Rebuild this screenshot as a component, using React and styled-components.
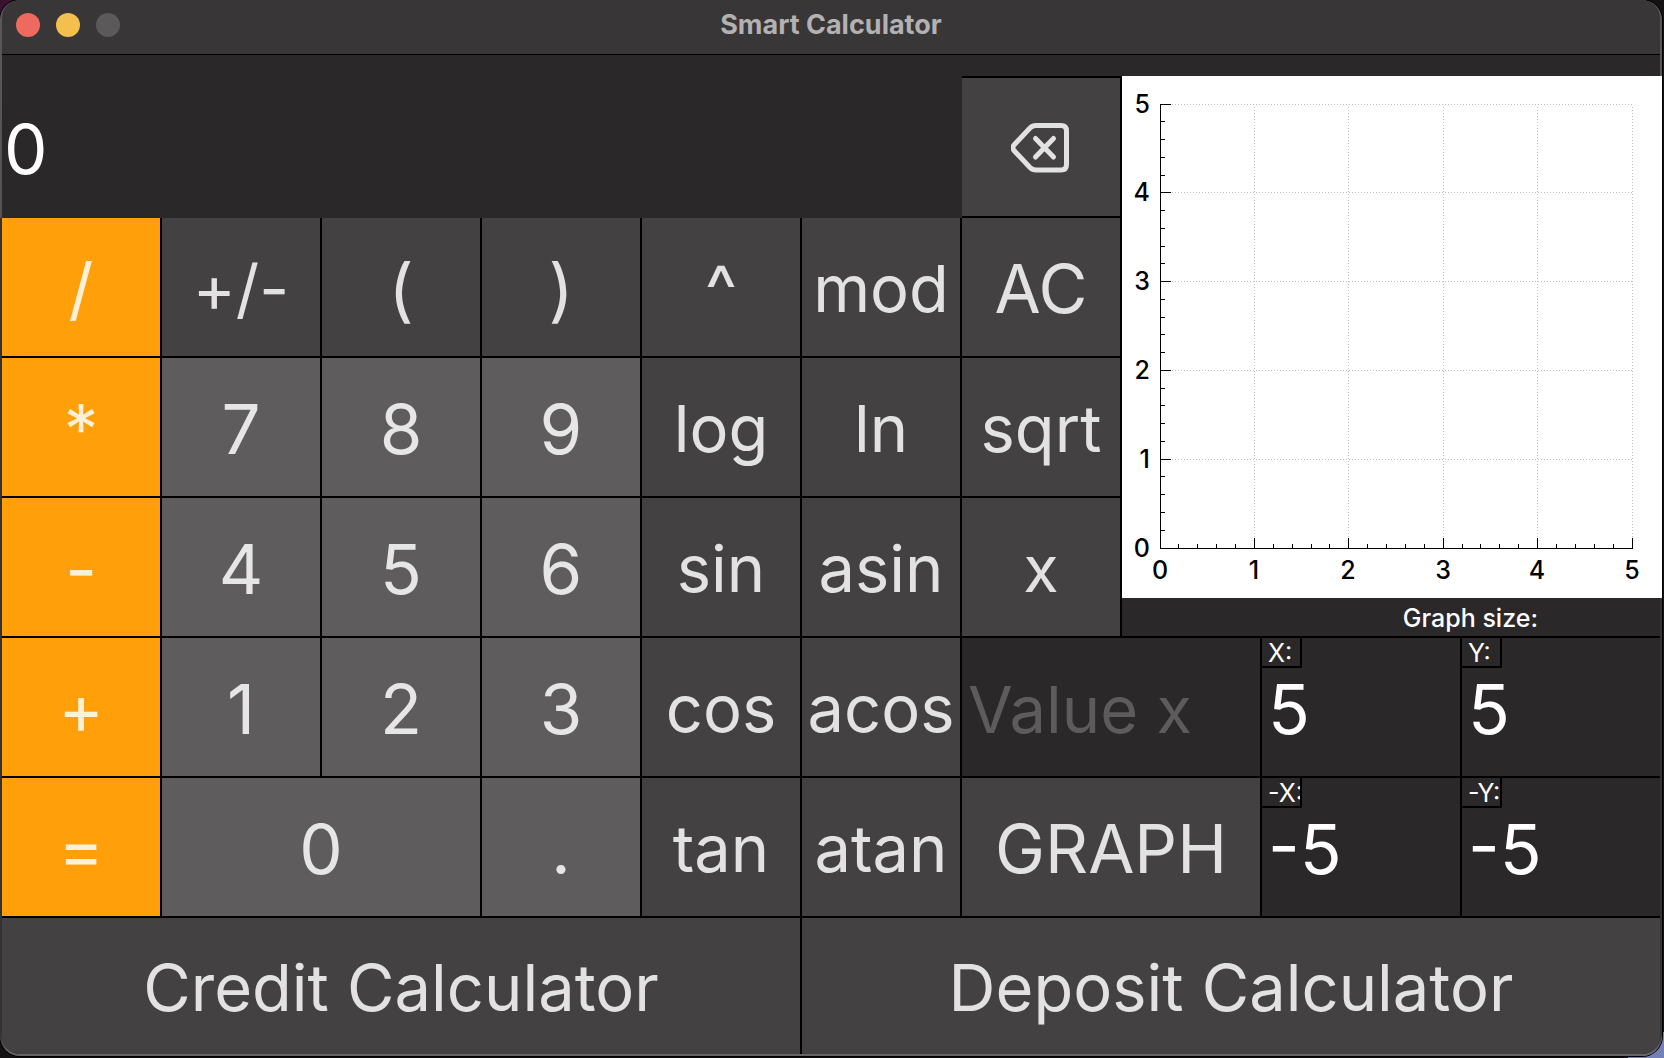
import React, { useState } from "react";
import styled, { createGlobalStyle } from "styled-components";

const GlobalStyle = createGlobalStyle`
  * { box-sizing: border-box; }
  body {
    margin: 0;
    background: #0c0b0c;
    font-family: Inter, "Liberation Sans", sans-serif;
  }
`;

const tones = {
  operator: { background: "#ff9f0a", color: "#fff0d8" },
  digit: { background: "#5e5c5d", color: "#e6e6e6" },
  action: { background: "#434142", color: "#e2e2e2" },
};

const sizes = { glyph: "69px", caps: "67px", word: "65px" };

const Desktop = styled.div`
  min-height: 100vh;
  padding: 0 2px 2px 0;
  background:
    linear-gradient(#7480b8, #7480b8) right bottom / 36px 26px no-repeat,
    linear-gradient(#3a1230, #3a1230) left top / 20px 20px no-repeat,
    #141213;
`;

const Window = styled.main`
  display: flex;
  flex-direction: column;
  min-height: calc(100vh - 2px);
  padding: 0 2px 2px;
  border-radius: 20px;
  background: linear-gradient(#5a5859 0, #545253 218px, #343334 218px, #343334 calc(100% - 22px), #666465 calc(100% - 4px));
  box-shadow: 0 0 0 1px #000;
  overflow: hidden;
`;

const TitleBar = styled.header`
  display: grid;
  grid-template-columns: 1fr auto 1fr;
  align-items: center;
  height: 55px;
  padding: 0 14px 4px;
  border-radius: 18px 18px 0 0;
  background: #383637;
  border-bottom: 1px solid #000;
`;

const Lights = styled.div`
  display: flex;
  gap: 16px;
`;

const Light = styled.button`
  width: 24px;
  height: 24px;
  padding: 0;
  border: 0;
  border-radius: 50%;
  background: ${(p) => p.$color};
`;

const Title = styled.h1`
  margin: 0;
  color: #b3b1b2;
  font-size: 27px;
  font-weight: 700;
  line-height: 32px;
`;

const Pad = styled.form`
  flex: 1;
  display: grid;
  grid-template-columns: repeat(7, 160fr) 140fr 200fr 198fr;
  grid-template-rows: 142px repeat(5, 140px) minmax(136px, 1fr);
  padding-top: 21px;
  border-radius: 0 0 18px 18px;
  background: #2a2829;
`;

const Display = styled.output`
  grid-column: span 6;
  display: flex;
  align-items: center;
  padding: 4px 2px 0;
  color: #fff;
  font-size: 69px;
`;

const Key = styled.button`
  grid-column: span ${(p) => p.$span || 1};
  display: flex;
  align-items: center;
  justify-content: center;
  min-width: 0;
  padding: 4px 0 0;
  border: 0 solid #000;
  border-width: ${(p) => p.$edges || "0 2px 2px 0"};
  border-radius: ${(p) => p.$corners || "0"};
  background: ${(p) => tones[p.$tone || "action"].background};
  color: ${(p) => tones[p.$tone || "action"].color};
  font-family: inherit;
  font-size: ${(p) => sizes[p.$size || "glyph"]};
  line-height: 84px;
  white-space: nowrap;
`;

const GraphPanel = styled.section`
  grid-column: 8 / span 3;
  grid-row: 1 / span 4;
  display: flex;
  flex-direction: column;
  border-bottom: 2px solid #000;
`;

const Plot = styled.div`
  flex: 1;
  min-height: 0;
  margin-right: -2px;
  background: #fff;

  svg {
    display: block;
    width: 100%;
    height: 100%;
  }
  text {
    font-size: 25px;
    font-weight: 500;
  }
`;

const GraphCaption = styled.h2`
  margin: 0;
  padding: 2px 122px 0 0;
  color: #fff;
  font-size: 25px;
  font-weight: 500;
  line-height: 36px;
  text-align: right;
`;

const Field = styled.div`
  grid-column: span ${(p) => p.$span || 1};
  position: relative;
  display: flex;
  border: 0 solid #000;
  border-width: ${(p) => (p.$last ? "0 0 2px 0" : "0 2px 2px 0")};
`;

const FieldInput = styled.input`
  flex: 1;
  width: 100%;
  min-width: 0;
  padding: 4px 6px 0;
  border: 0;
  outline: 0;
  background: transparent;
  color: #fff;
  font-family: inherit;
  font-size: ${(p) => sizes[p.$size || "glyph"]};

  &::placeholder {
    color: #5d5b5c;
    opacity: 1;
  }
`;

const FieldLabel = styled.label`
  position: absolute;
  top: 0;
  left: 0;
  width: 40px;
  height: 30px;
  padding-left: 6px;
  overflow: hidden;
  border: 0 solid #000;
  border-width: 0 2px 2px 0;
  color: #fff;
  font-size: 25px;
  line-height: 30px;
  white-space: nowrap;
`;

const LEFT = 38;
const TOP = 28;
const WIDTH = 472;
const HEIGHT = 444;
const BOTTOM = TOP + HEIGHT;
const majors = [0, 1, 2, 3, 4, 5];
const ticks = Array.from({ length: 26 }, (_, i) => i);
const atX = (v) => Math.floor(LEFT + (WIDTH * v) / 5);
const atY = (v) => Math.floor(BOTTOM - (HEIGHT * v) / 5);

function Axes() {
  return (
    <svg viewBox="0 0 540 522" role="img" aria-label="Graph" shapeRendering="crispEdges">
      <g stroke="#bfbfbf" strokeDasharray="1 2">
        {majors.slice(1).map((v) => (
          <g key={v}>
            <line x1={atX(v) + 0.5} x2={atX(v) + 0.5} y1={TOP + 3} y2={BOTTOM - 10} />
            <line x1={LEFT + 12} x2={LEFT + WIDTH} y1={atY(v) + 0.5} y2={atY(v) + 0.5} />
          </g>
        ))}
      </g>
      <g stroke="#000">
        <path fill="none" d={`M${LEFT + 0.5} ${TOP}V${BOTTOM + 0.5}H${LEFT + WIDTH + 1}`} />
        {ticks.map((i) => {
          const size = i % 5 ? 4 : 10;
          return (
            <g key={i}>
              <line x1={atX(i / 5) + 0.5} x2={atX(i / 5) + 0.5} y1={BOTTOM} y2={BOTTOM - size} />
              <line x1={LEFT} x2={LEFT + 1 + size} y1={atY(i / 5) + 0.5} y2={atY(i / 5) + 0.5} />
            </g>
          );
        })}
      </g>
      {majors.map((v) => (
        <g key={v}>
          <text x={atX(v)} y={503} textAnchor="middle">{v}</text>
          <text x={28} y={atY(v) + 9} textAnchor="end">{v}</text>
        </g>
      ))}
    </svg>
  );
}

function BackspaceIcon() {
  return (
    <svg width="60" height="52" viewBox="0 0 60 52" fill="none" stroke="currentColor" strokeWidth="5" strokeLinecap="round" strokeLinejoin="round" aria-hidden="true">
      <path d="M25 2.500H50Q55.500 2.500 55.500 8V41.500Q55.500 47 50 47H25Q21.500 47 19 44.500L3 27.500Q0.800 24.750 3 22L19 5Q21.500 2.500 25 2.500Z" />
      <path d="M24.500 15.500L42.500 34M42.500 15.500L24.500 34" />
    </svg>
  );
}

const op = (label) => ({ label, tone: "operator" });
const num = (label, span) => ({ label, tone: "digit", span });
const mark = (label) => ({ label });
const caps = (label, span) => ({ label, span, size: "caps" });
const fn = (label) => ({ label, size: "word" });

const rows = [
  [op("/"), fn("+/-"), mark("("), mark(")"), mark("^"), fn("mod"), caps("AC")],
  [op("*"), num("7"), num("8"), num("9"), fn("log"), fn("ln"), fn("sqrt")],
  [op("-"), num("4"), num("5"), num("6"), fn("sin"), fn("asin"), fn("x")],
  [op("+"), num("1"), num("2"), num("3"), fn("cos"), fn("acos")],
  [op("="), num("0", 2), num("."), fn("tan"), fn("atan"), caps("GRAPH", 2)],
];

function Keys({ keys }) {
  return keys.map((k) => (
    <Key key={k.label} type="button" $tone={k.tone} $span={k.span} $size={k.size}>
      {k.label}
    </Key>
  ));
}

function Bound({ id, label, initial, last }) {
  const [value, setValue] = useState(initial);
  return (
    <Field $last={last}>
      <FieldLabel htmlFor={id}>{label}</FieldLabel>
      <FieldInput id={id} value={value} onChange={(e) => setValue(e.target.value)} />
    </Field>
  );
}

export default function App() {
  return (
    <Desktop>
      <GlobalStyle />
      <Window>
        <TitleBar>
          <Lights>
            <Light type="button" aria-label="Close" $color="#ee6a5f" />
            <Light type="button" aria-label="Minimize" $color="#f5bf4f" />
            <Light type="button" aria-label="Zoom" disabled $color="#5b595a" />
          </Lights>
          <Title>Smart Calculator</Title>
        </TitleBar>
        <Pad>
          <Display>0</Display>
          <Key type="button" aria-label="Backspace" $edges="2px 2px 2px 0">
            <BackspaceIcon />
          </Key>
          <GraphPanel>
            <Plot>
              <Axes />
            </Plot>
            <GraphCaption>Graph size:</GraphCaption>
          </GraphPanel>
          <Keys keys={rows[0]} />
          <Keys keys={rows[1]} />
          <Keys keys={rows[2]} />
          <Keys keys={rows[3]} />
          <Field $span={2}>
            <FieldInput $size="word" aria-label="Value x" placeholder="Value x" />
          </Field>
          <Bound id="max-x" label="X:" initial="5" />
          <Bound id="max-y" label="Y:" initial="5" last />
          <Keys keys={rows[4]} />
          <Bound id="min-x" label="-X:" initial="-5" />
          <Bound id="min-y" label="-Y:" initial="-5" last />
          <Key type="button" $span={5} $size="word" $edges="0 2px 0 0" $corners="0 0 0 18px">
            Credit Calculator
          </Key>
          <Key type="button" $span={5} $size="word" $edges="0" $corners="0 0 18px 0">
            Deposit Calculator
          </Key>
        </Pad>
      </Window>
    </Desktop>
  );
}
